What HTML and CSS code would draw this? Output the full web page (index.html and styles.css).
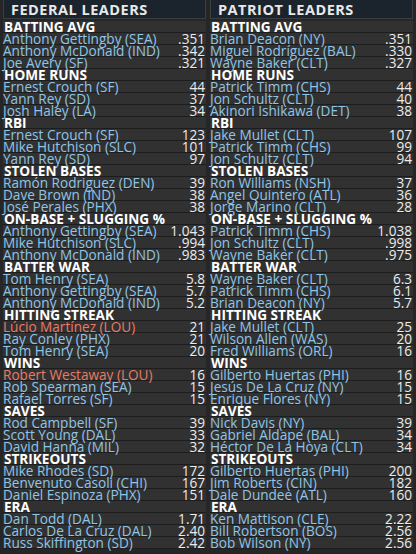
FILE: index.html
```html
<!DOCTYPE html>
<html lang="en">
<head>
    <meta charset="UTF-8">
    <meta name="viewport" content="width=device-width, initial-scale=1.0">
    <title>League Leaders</title>
    <link rel="stylesheet" href="styles.css">
</head>
<body>
    <div class="leaders">
        <div class="league">
            <div class="league-title">FEDERAL LEADERS</div>
            <div class="cat">BATTING AVG</div>
            <div class="row"><span class="name">Anthony Gettingby (SEA)</span><span class="val">.351</span></div>
            <div class="row"><span class="name">Anthony McDonald (IND)</span><span class="val">.342</span></div>
            <div class="row"><span class="name">Joe Avery (SF)</span><span class="val">.321</span></div>
            <div class="cat">HOME RUNS</div>
            <div class="row"><span class="name">Ernest Crouch (SF)</span><span class="val">44</span></div>
            <div class="row"><span class="name">Yann Rey (SD)</span><span class="val">37</span></div>
            <div class="row"><span class="name">Josh Haley (LA)</span><span class="val">34</span></div>
            <div class="cat">RBI</div>
            <div class="row"><span class="name">Ernest Crouch (SF)</span><span class="val">123</span></div>
            <div class="row"><span class="name">Mike Hutchison (SLC)</span><span class="val">101</span></div>
            <div class="row"><span class="name">Yann Rey (SD)</span><span class="val">97</span></div>
            <div class="cat">STOLEN BASES</div>
            <div class="row"><span class="name">Ramón Rodriguez (DEN)</span><span class="val">39</span></div>
            <div class="row"><span class="name">Dave Brown (IND)</span><span class="val">38</span></div>
            <div class="row"><span class="name">José Perales (PHX)</span><span class="val">38</span></div>
            <div class="cat">ON-BASE + SLUGGING %</div>
            <div class="row"><span class="name">Anthony Gettingby (SEA)</span><span class="val">1.043</span></div>
            <div class="row"><span class="name">Mike Hutchison (SLC)</span><span class="val">.994</span></div>
            <div class="row"><span class="name">Anthony McDonald (IND)</span><span class="val">.983</span></div>
            <div class="cat">BATTER WAR</div>
            <div class="row"><span class="name">Tom Henry (SEA)</span><span class="val">5.8</span></div>
            <div class="row"><span class="name">Anthony Gettingby (SEA)</span><span class="val">5.7</span></div>
            <div class="row"><span class="name">Anthony McDonald (IND)</span><span class="val">5.2</span></div>
            <div class="cat">HITTING STREAK</div>
            <div class="row"><span class="name hot">Lúcio Martínez (LOU)</span><span class="val">21</span></div>
            <div class="row"><span class="name">Ray Conley (PHX)</span><span class="val">21</span></div>
            <div class="row"><span class="name">Tom Henry (SEA)</span><span class="val">20</span></div>
            <div class="cat">WINS</div>
            <div class="row"><span class="name hot">Robert Westaway (LOU)</span><span class="val">16</span></div>
            <div class="row"><span class="name">Rob Spearman (SEA)</span><span class="val">15</span></div>
            <div class="row"><span class="name">Rafael Torres (SF)</span><span class="val">15</span></div>
            <div class="cat">SAVES</div>
            <div class="row"><span class="name">Rod Campbell (SF)</span><span class="val">39</span></div>
            <div class="row"><span class="name">Scott Young (DAL)</span><span class="val">33</span></div>
            <div class="row"><span class="name">David Hanna (MIL)</span><span class="val">32</span></div>
            <div class="cat">STRIKEOUTS</div>
            <div class="row"><span class="name">Mike Rhodes (SD)</span><span class="val">172</span></div>
            <div class="row"><span class="name">Benvenuto Casoli (CHI)</span><span class="val">167</span></div>
            <div class="row"><span class="name">Daniel Espinoza (PHX)</span><span class="val">151</span></div>
            <div class="cat">ERA</div>
            <div class="row"><span class="name">Dan Todd (DAL)</span><span class="val">1.71</span></div>
            <div class="row"><span class="name">Carlos De La Cruz (DAL)</span><span class="val">2.40</span></div>
            <div class="row"><span class="name">Russ Skiffington (SD)</span><span class="val">2.42</span></div>
        </div>
        <div class="league">
            <div class="league-title">PATRIOT LEADERS</div>
            <div class="cat">BATTING AVG</div>
            <div class="row"><span class="name">Brian Deacon (NY)</span><span class="val">.351</span></div>
            <div class="row"><span class="name">Miguel Rodríguez (BAL)</span><span class="val">.330</span></div>
            <div class="row"><span class="name">Wayne Baker (CLT)</span><span class="val">.327</span></div>
            <div class="cat">HOME RUNS</div>
            <div class="row"><span class="name">Patrick Timm (CHS)</span><span class="val">44</span></div>
            <div class="row"><span class="name">Jon Schultz (CLT)</span><span class="val">40</span></div>
            <div class="row"><span class="name">Akinori Ishikawa (DET)</span><span class="val">38</span></div>
            <div class="cat">RBI</div>
            <div class="row"><span class="name">Jake Mullet (CLT)</span><span class="val">107</span></div>
            <div class="row"><span class="name">Patrick Timm (CHS)</span><span class="val">99</span></div>
            <div class="row"><span class="name">Jon Schultz (CLT)</span><span class="val">94</span></div>
            <div class="cat">STOLEN BASES</div>
            <div class="row"><span class="name">Ron Williams (NSH)</span><span class="val">37</span></div>
            <div class="row"><span class="name">Angel Quintero (ATL)</span><span class="val">36</span></div>
            <div class="row"><span class="name">Jorge Marino (CLT)</span><span class="val">28</span></div>
            <div class="cat">ON-BASE + SLUGGING %</div>
            <div class="row"><span class="name">Patrick Timm (CHS)</span><span class="val">1.038</span></div>
            <div class="row"><span class="name">Jon Schultz (CLT)</span><span class="val">.998</span></div>
            <div class="row"><span class="name">Wayne Baker (CLT)</span><span class="val">.975</span></div>
            <div class="cat">BATTER WAR</div>
            <div class="row"><span class="name">Wayne Baker (CLT)</span><span class="val">6.3</span></div>
            <div class="row"><span class="name">Patrick Timm (CHS)</span><span class="val">6.1</span></div>
            <div class="row"><span class="name">Brian Deacon (NY)</span><span class="val">5.7</span></div>
            <div class="cat">HITTING STREAK</div>
            <div class="row"><span class="name">Jake Mullet (CLT)</span><span class="val">25</span></div>
            <div class="row"><span class="name">Wilson Allen (WAS)</span><span class="val">20</span></div>
            <div class="row"><span class="name">Fred Williams (ORL)</span><span class="val">16</span></div>
            <div class="cat">WINS</div>
            <div class="row"><span class="name">Gilberto Huertas (PHI)</span><span class="val">16</span></div>
            <div class="row"><span class="name">Jesús De La Cruz (NY)</span><span class="val">15</span></div>
            <div class="row"><span class="name">Enrique Flores (NY)</span><span class="val">15</span></div>
            <div class="cat">SAVES</div>
            <div class="row"><span class="name">Nick Davis (NY)</span><span class="val">39</span></div>
            <div class="row"><span class="name">Gabriel Aldape (BAL)</span><span class="val">34</span></div>
            <div class="row"><span class="name">Héctor De La Hoya (CLT)</span><span class="val">34</span></div>
            <div class="cat">STRIKEOUTS</div>
            <div class="row"><span class="name">Gilberto Huertas (PHI)</span><span class="val">200</span></div>
            <div class="row"><span class="name">Jim Roberts (CIN)</span><span class="val">182</span></div>
            <div class="row"><span class="name">Dale Dundee (ATL)</span><span class="val">160</span></div>
            <div class="cat">ERA</div>
            <div class="row"><span class="name">Ken Mattison (CLE)</span><span class="val">2.22</span></div>
            <div class="row"><span class="name">Bill Robertson (BOS)</span><span class="val">2.56</span></div>
            <div class="row"><span class="name">Bob Wilson (NY)</span><span class="val">2.56</span></div>
        </div>
    </div>
</body>
</html>
```

FILE: styles.css
```css
body {
    margin: 0;
    background-color: #262626;
    font-family: 'Open Sans', 'Noto Sans', sans-serif;
    color: #e6e6e6;
}

.leaders {
    display: grid;
    grid-template-columns: 1fr 1fr;
    gap: 4px;
    padding: 0 3px 4px;
}

.league-title {
    height: 19px;
    line-height: 19px;
    margin-bottom: 2px;
    padding-left: 7px;
    font-size: 14.5px;
    font-weight: bold;
    letter-spacing: 0.5px;
    color: #e8e8e8;
    background-color: #1b242d;
    border: 1px solid #3a3f44;
    border-top: 0;
    box-sizing: border-box;
}

.cat,
.row {
    height: 12px;
    line-height: 12px;
    font-size: 13.6px;
    background-color: #313131;
    border-bottom: 1px solid #1d1d1d;
    box-sizing: border-box;
    white-space: nowrap;
}

.cat {
    font-weight: bold;
    color: #ffffff;
    padding-left: 1px;
}

.row {
    display: flex;
    justify-content: space-between;
}

.name {
    color: #90c5e6;
}

.name.hot {
    color: #e97b66;
}

.val {
    color: #ececec;
    padding-right: 1px;
}
```
